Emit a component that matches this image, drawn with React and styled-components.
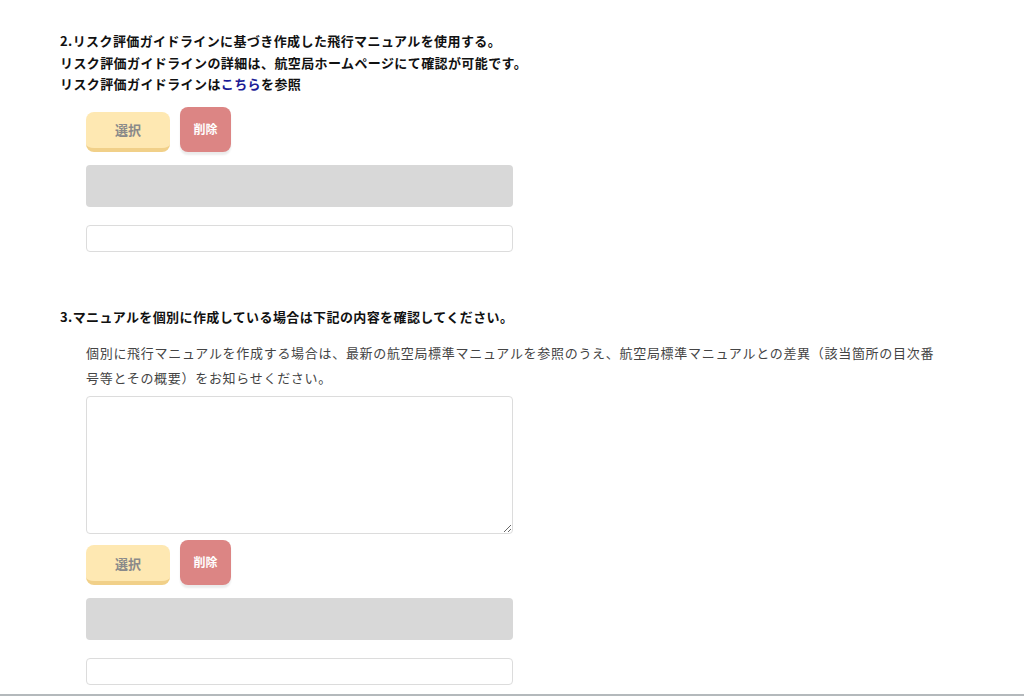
import React from "react";
import styled, { createGlobalStyle } from "styled-components";

const GlobalStyle = createGlobalStyle`
  html, body { margin: 0; padding: 0; background: #fff; }
  body {
    font-family: "Noto Sans CJK JP", "Noto Sans", sans-serif;
    color: #222;
  }
`;

const Page = styled.div`
  padding: 30px 60px 10px;
  min-height: 654px;
`;

const Section = styled.section`
  margin-bottom: ${({ gap }) => gap || "0"};
`;

const Heading = styled.div`
  font-size: 13px;
  font-weight: bold;
  line-height: 21.5px;
  letter-spacing: 0.4px;
  color: #111;
  a {
    color: #1c1c96;
    text-decoration: none;
  }
`;

const Body = styled.div`
  padding-left: 26px;
  margin-top: ${({ top }) => top || "0"};
`;

const Note = styled.p`
  margin: 0 0 6px;
  width: 860px;
  font-size: 13px;
  line-height: 25px;
  letter-spacing: 0.7px;
  color: #444;
`;

const ButtonRow = styled.div`
  display: flex;
  align-items: flex-end;
  gap: 10px;
`;

const SelectButton = styled.button`
  width: 84px;
  height: 40px;
  border: none;
  border-bottom: 4px solid #f1d089;
  border-radius: 8px;
  background: #fee8b2;
  color: #8a8a8a;
  font-family: inherit;
  font-size: 13px;
  font-weight: bold;
  padding: 0;
`;

const DeleteButton = styled.button`
  width: 51px;
  height: 45px;
  border: none;
  border-radius: 8px;
  background: #dc8584;
  color: #fff;
  font-family: inherit;
  font-size: 12px;
  font-weight: bold;
  padding: 0 0 2px;
  box-shadow: 0 3px 2px rgba(0, 0, 0, 0.08);
`;

const FileBox = styled.div`
  width: 427px;
  height: 42px;
  margin-top: 13px;
  border-radius: 4px;
  background: #d8d8d8;
`;

const TextInput = styled.input`
  display: block;
  box-sizing: border-box;
  width: 427px;
  height: 27px;
  margin-top: 18px;
  border: 1px solid #dcdcdc;
  border-radius: 4px;
  background: #fff;
  outline: none;
`;

const TextArea = styled.textarea`
  display: block;
  box-sizing: border-box;
  width: 427px;
  height: 138px;
  margin: 0 0 6px;
  border: 1px solid #dcdcdc;
  border-radius: 4px;
  resize: vertical;
  outline: none;
`;

const BottomLine = styled.div`
  position: fixed;
  left: 0;
  right: 0;
  bottom: 0;
  height: 2px;
  background: #b4b9bc;
`;

function Uploader() {
  return (
    <>
      <ButtonRow>
        <SelectButton>選択</SelectButton>
        <DeleteButton>削除</DeleteButton>
      </ButtonRow>
      <FileBox />
      <TextInput type="text" />
    </>
  );
}

export default function App() {
  return (
    <>
      <GlobalStyle />
      <Page>
        <Section gap="54px">
          <Heading>
            2.リスク評価ガイドラインに基づき作成した飛行マニュアルを使用する。
            <br />
            リスク評価ガイドラインの詳細は、航空局ホームページにて確認が可能です。
            <br />
            リスク評価ガイドラインは<a href="#">こちら</a>を参照
          </Heading>
          <Body top="12px">
            <Uploader />
          </Body>
        </Section>
        <Section>
          <Heading>3.マニュアルを個別に作成している場合は下記の内容を確認してください。</Heading>
          <Body top="13px">
            <Note>
              個別に飛行マニュアルを作成する場合は、最新の航空局標準マニュアルを参照のうえ、航空局標準マニュアルとの差異（該当箇所の目次番号等とその概要）をお知らせください。
            </Note>
            <TextArea />
            <Uploader />
          </Body>
        </Section>
      </Page>
      <BottomLine />
    </>
  );
}
